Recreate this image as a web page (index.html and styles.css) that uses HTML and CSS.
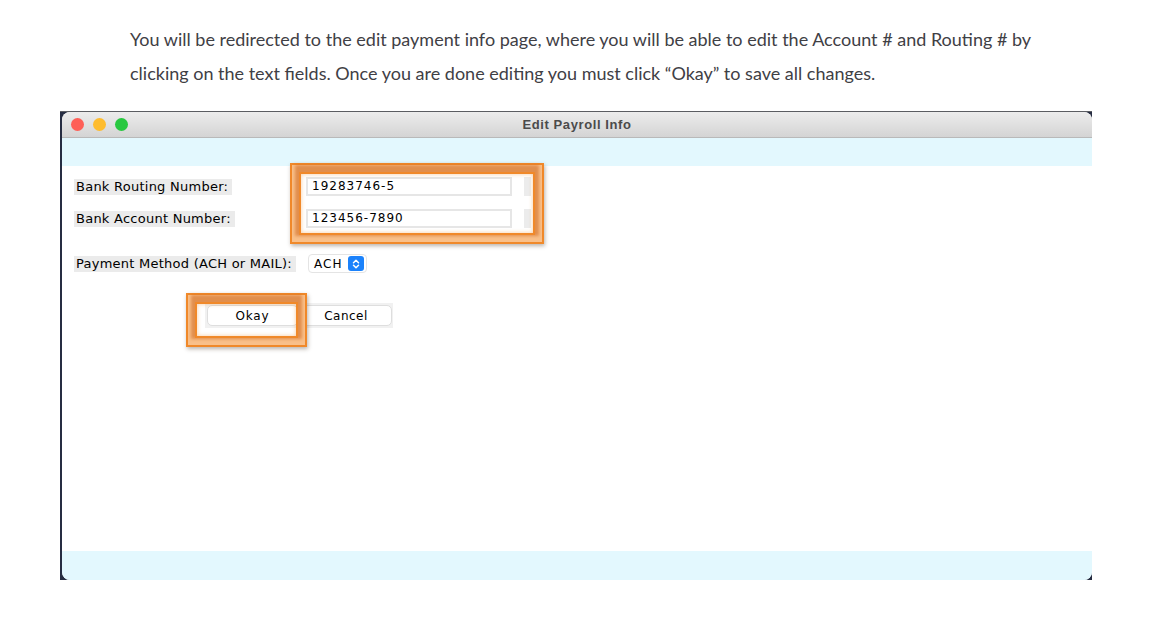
FILE: index.html
```html
<!DOCTYPE html>
<html>
<head>
<meta charset="utf-8">
<link rel="stylesheet" href="styles.css">
</head>
<body>
<div class="page">
  <p class="intro"><span class="line">You will be redirected to the edit payment info page, where you will be able to edit the Account # and Routing # by</span><span class="line">clicking on the text fields. Once you are done editing you must click “Okay” to save all changes.</span></p>

  <div class="frame">
    <div class="window">
      <div class="titlebar">
        <div class="lights">
          <span class="light red"></span>
          <span class="light yellow"></span>
          <span class="light green"></span>
        </div>
        <div class="title">Edit Payroll Info</div>
      </div>
      <div class="band"></div>
      <div class="body">
        <div class="form">
          <div class="row">
            <div class="cell"><span class="label">Bank Routing Number:</span></div>
            <div class="field">19283746-5</div>
            <div class="stub"></div>
          </div>
          <div class="row">
            <div class="cell"><span class="label">Bank Account Number:</span></div>
            <div class="field">123456-7890</div>
            <div class="stub"></div>
          </div>
          <div class="row method">
            <div class="cell wide"><span class="label">Payment Method (ACH or MAIL):</span></div>
            <div class="select">ACH
              <span class="stepper">
                <svg width="10" height="12" viewBox="0 0 10 12"><path d="M2.5 4.8 L5 2.3 L7.5 4.8 M2.5 7.2 L5 9.7 L7.5 7.2" fill="none" stroke="#fff" stroke-width="1.5" stroke-linecap="round" stroke-linejoin="round"/></svg>
              </span>
            </div>
          </div>
          <div class="buttons">
            <button class="btn okay">Okay</button>
            <button class="btn">Cancel</button>
          </div>
        </div>
        <div class="hl hl-fields"><div class="hl-inner"></div></div>
        <div class="hl hl-okay"><div class="hl-inner"></div></div>
      </div>
      <div class="band bottom"></div>
    </div>
  </div>
</div>
</body>
</html>
```

FILE: styles.css
```css
* { box-sizing: border-box; }
html, body { margin: 0; padding: 0; background: #fff; }
.page { width: 1150px; height: 638px; overflow: hidden; }

.intro {
  margin: 0;
  padding: 22px 0 0 130px;
  font-family: Lato, "Open Sans", sans-serif;
  font-size: 18px;
  color: #3f4045;
}
.intro .line { display: block; height: 34px; line-height: 34px; white-space: nowrap; }

.frame {
  margin: 21px 0 0 60px;
  width: 1032px;
  height: 469px;
  background: #262d42;
  border-top: 1px solid #5b5d62;
  padding-left: 2px;
}
.window {
  height: 100%;
  width: 100%;
  border-radius: 8px;
  overflow: hidden;
  background: #fff;
  display: flex;
  flex-direction: column;
}
.titlebar {
  height: 26px;
  flex: none;
  background: linear-gradient(#ececec, #d4d4d4);
  border-bottom: 1px solid #b9b9b9;
  display: flex;
  align-items: center;
  position: relative;
}
.lights { display: flex; gap: 9px; padding-left: 9px; }
.light { width: 13px; height: 13px; border-radius: 50%; display: block; }
.red { background: #fe5f57; }
.yellow { background: #febc2e; }
.green { background: #28c840; }
.title {
  position: absolute;
  left: 0; right: 0; top: 0; bottom: 0;
  text-align: center;
  line-height: 25px;
  font-family: "Liberation Sans", Arial, sans-serif;
  font-weight: bold;
  font-size: 13px;
  letter-spacing: 0.6px;
  color: #4b4b4b;
}
.band { height: 28px; flex: none; background: #e3f8fe; }
.band.bottom { height: 29px; }
.body { flex: 1; position: relative; }

.form {
  padding: 11px 0 0 12px;
  display: flex;
  flex-direction: column;
  align-items: flex-start;
  gap: 13px;
  font-family: "DejaVu Sans", Verdana, sans-serif;
  font-size: 12px;
  color: #000;
}
.row { display: flex; align-items: center; height: 19px; }
.cell { width: 232px; flex: none; }
.cell.wide { width: 234px; }
.label {
  display: inline-block;
  background: #ebebeb;
  height: 16px;
  line-height: 16px;
  padding: 0 4px 0 2px;
  font-size: 13px;
  letter-spacing: 0.25px;
}
.field {
  width: 206px;
  height: 19px;
  background: #fff;
  border: 2px solid #e6e6e6;
  padding-left: 4px;
  line-height: 15px;
  letter-spacing: 1px;
}
.stub { width: 7px; height: 19px; background: #ececec; margin-left: 12px; }
.row.method { margin-top: 13px; height: 19px; }
.select {
  height: 19px;
  width: 59px;
  border: 1px solid #e4e4e4;
  border-radius: 4px;
  display: flex;
  align-items: center;
  justify-content: space-between;
  padding: 0 2px 0 5px;
  letter-spacing: 1px;
}
.stepper {
  width: 16px; height: 15px;
  background: #1b82fb;
  border-radius: 3px;
  display: flex; align-items: center; justify-content: center;
}
.stepper svg { display: block; }

.buttons {
  margin: 17px 0 0 131px;
  display: flex;
  background: #f1f1f1;
  padding: 2px 1px 2px 2px;
  gap: 2px;
}
.btn {
  width: 92px;
  height: 21px;
  background: #fff;
  border: 1px solid #dedede;
  border-radius: 5px;
  font-family: "DejaVu Sans", Verdana, sans-serif;
  font-size: 12px;
  letter-spacing: 0.5px;
  color: #000;
  padding: 0;
}
.btn.okay { width: 91px; letter-spacing: 0.8px; }

.hl {
  position: absolute;
  border: 2px solid #f0892a;
  padding: 7px;
  box-shadow: 1px 2px 4px rgba(60,40,20,0.35);
}
.hl-inner {
  width: 100%; height: 100%;
  border: 2px solid #f0892a;
  box-shadow:
    0 -3px 3px 4px rgba(205,100,25,0.55),
    0 0 0 7px #f9c08a,
    inset 0 0 4px rgba(240,140,40,0.45);
}
.hl-fields { left: 228px; top: -3px; width: 254px; height: 81px; }
.hl-okay { left: 124px; top: 127px; width: 121px; height: 54px; }
```
